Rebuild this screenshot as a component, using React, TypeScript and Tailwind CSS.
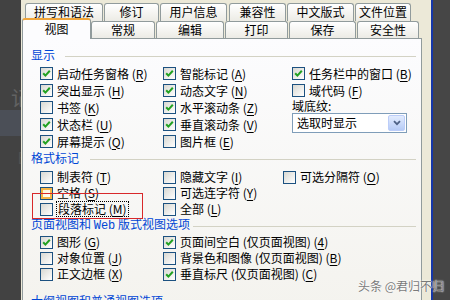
import React from 'react';

type O = { t: string; k: string; on?: boolean; hover?: boolean; focus?: boolean };

const ROW1 = [
  { t: '拼写和语法', c: 'ml-[4px] w-[78px]' },
  { t: '修订', c: 'ml-[1px] w-[55px]' },
  { t: '用户信息', c: 'ml-[1px] w-[67px]' },
  { t: '兼容性', c: 'ml-[2px] w-[57px]' },
  { t: '中文版式', c: 'ml-[1px] w-[67px]' },
  { t: '文件位置', c: 'ml-[1px] w-[56px]' },
];

const ROW2 = [
  { t: '常规', c: 'ml-0 w-[64px]' },
  { t: '编辑', c: 'ml-[1px] w-[68px]' },
  { t: '打印', c: 'ml-[1px] w-[63px]' },
  { t: '保存', c: 'ml-[1px] w-[67px]' },
  { t: '安全性', c: 'ml-[1px] w-[62px]' },
];

const S1: O[][] = [
  [
    { t: '启动任务窗格', k: 'R', on: true },
    { t: '突出显示', k: 'H', on: true },
    { t: '书签', k: 'K' },
    { t: '状态栏', k: 'U', on: true },
    { t: '屏幕提示', k: 'Q', on: true },
  ],
  [
    { t: '智能标记', k: 'A', on: true },
    { t: '动态文字', k: 'N', on: true },
    { t: '水平滚动条', k: 'Z', on: true },
    { t: '垂直滚动条', k: 'V', on: true },
    { t: '图片框', k: 'E' },
  ],
];

const S2: O[][] = [
  [
    { t: '制表符', k: 'T' },
    { t: '空格', k: 'S', hover: true },
    { t: '段落标记', k: 'M', focus: true },
  ],
  [
    { t: '隐藏文字', k: 'I' },
    { t: '可选连字符', k: 'Y' },
    { t: '全部', k: 'L' },
  ],
  [{ t: '可选分隔符', k: 'O' }],
];

const S3: O[][] = [
  [
    { t: '图形', k: 'G', on: true },
    { t: '对象位置', k: 'J' },
    { t: '正文边框', k: 'X' },
  ],
  [
    { t: '页面间空白 (仅页面视图)', k: '4', on: true },
    { t: '背景色和图像 (仅页面视图)', k: 'B' },
    { t: '垂直标尺 (仅页面视图)', k: 'C', on: true },
  ],
];

function Box({ on, hover }: { on?: boolean; hover?: boolean }) {
  return (
    <span className="relative flex h-[13px] w-[13px] shrink-0 items-center justify-center border border-[#1c5180] bg-gradient-to-br from-[#d8d8d2] to-white">
      {hover && <span className="absolute inset-0 border-2 border-[#f7b545] bg-gradient-to-br from-[#fff3d2] to-white" />}
      {on && (
        <svg width="9" height="9" viewBox="0 0 9 9" className="relative">
          <path d="M1.2 4.2 L3.4 6.6 L7.8 1.8" stroke="#21a121" strokeWidth="2" fill="none" />
        </svg>
      )}
    </span>
  );
}

function Opt({ t, k, on, hover, focus }: O) {
  return (
    <div className="flex h-full items-center gap-[4px] whitespace-nowrap">
      <Box on={on} hover={hover} />
      <span className={focus ? 'px-[1px] outline-1 outline-dotted outline-black' : ''}>
        {t} (<span className="underline underline-offset-2">{k}</span>)
      </span>
    </div>
  );
}

function Head({ children, gap }: { children: React.ReactNode; gap: string }) {
  return (
    <div className="flex h-[14px] items-center pl-[8px] pr-[5px] text-[#0046d5]">
      <span className="whitespace-nowrap">{children}</span>
      <span className={`mt-[3px] h-px flex-1 bg-[#d3d2c4] ${gap}`} />
    </div>
  );
}

export default function App() {
  return (
    <div className="relative flex h-[300px] w-[450px] overflow-hidden bg-[#454545] font-['Noto_Sans_CJK_SC',sans-serif] text-[12px] leading-[14px] text-black">
      {/* 左侧背景 */}
      <div className="flex w-[21px] shrink-0 flex-col overflow-hidden bg-[#424242]">
        <div className="h-[86px]" />
        <div className="-mr-[10px] flex h-[24px] items-center justify-end text-[20px] text-[#626262]">记</div>
        <div className="h-[26px] bg-[#4b4f57]" />
        <div className="-mr-[6px] mt-[12px] flex h-[18px] items-center justify-end text-[16px] text-[#525252]">E</div>
      </div>

      {/* 对话框 */}
      <div className="flex w-[410px] shrink-0 flex-col bg-[#ece9d8] pt-[3px]">
        <div className="flex h-[18px]">
          {ROW1.map((x) => (
            <div
              key={x.t}
              className={`${x.c} flex h-[18px] items-center justify-center rounded-t-[3px] border border-b-0 border-[#919b9c] bg-gradient-to-b from-white to-[#ecebe5] pb-[1px]`}
            >
              {x.t}
            </div>
          ))}
        </div>
        <div className="relative z-10 -mt-[3px] flex h-[20px] items-end">
          <div className="-mb-[1px] ml-[1px] flex h-[21px] w-[69px] items-center justify-center rounded-t-[3px] border-x border-t-2 border-[#919b9c] border-t-[#f0a53a] bg-[#fcfcfe] pb-[2px]">
            视图
          </div>
          {ROW2.map((x) => (
            <div
              key={x.t}
              className={`${x.c} flex h-[17px] items-center justify-center rounded-t-[3px] border border-b-0 border-[#919b9c] bg-gradient-to-b from-white to-[#ecebe5]`}
            >
              {x.t}
            </div>
          ))}
        </div>

        {/* 面板 */}
        <div className="ml-[1px] flex w-[400px] flex-1 flex-col border border-[#919b9c] bg-gradient-to-b from-[#fcfcfe] to-[#f4f3ee] pt-[9px]">
          <Head gap="ml-[10px]">显示</Head>
          <div className="mt-[3px] grid grid-cols-[123px_129px_1fr] pl-[17px]">
            {S1.map((col, i) => (
              <div key={i} className="flex flex-col">
                {col.map((o) => (
                  <div key={o.t} className="h-[17px]">
                    <Opt {...o} />
                  </div>
                ))}
              </div>
            ))}
            <div className="flex flex-col">
              <div className="h-[17px]">
                <Opt t="任务栏中的窗口" k="B" on />
              </div>
              <div className="h-[17px]">
                <Opt t="域代码" k="F" />
              </div>
              <div className="flex h-[14px] items-center">
                域底纹<span className="underline underline-offset-2">:</span>
              </div>
              <div className="flex h-[20px] w-[115px] items-center justify-between border border-[#7f9db9] bg-white pl-[4px] pr-[1px]">
                <span>选取时显示</span>
                <span className="flex h-[16px] w-[17px] items-center justify-center rounded-[2px] border border-[#bccdf9] bg-gradient-to-b from-[#e3ecfe] to-[#b6cbf6]">
                  <svg width="8" height="6" viewBox="0 0 8 6">
                    <path d="M1 1.2 L4 4.2 L7 1.2" stroke="#4d6185" strokeWidth="1.8" fill="none" />
                  </svg>
                </span>
              </div>
            </div>
          </div>

          <div className="mt-[1px]">
            <Head gap="ml-[11px]">格式标记</Head>
          </div>
          <div className="mt-[4px] grid grid-cols-[123px_120px_1fr] pl-[17px]">
            {S2.map((col, i) => (
              <div key={i} className="flex flex-col">
                {col.map((o) => (
                  <div key={o.t} className="h-[16px]">
                    <Opt {...o} />
                  </div>
                ))}
              </div>
            ))}
          </div>

          <div className="mt-[1px]">
            <Head gap="ml-[3px]">
              页面视图和 <span className="font-['Liberation_Mono',monospace]">Web</span> 版式视图选项
            </Head>
          </div>
          <div className="mt-[2px] grid grid-cols-[123px_1fr] pl-[17px]">
            {S3.map((col, i) => (
              <div key={i} className="flex flex-col">
                {col.map((o) => (
                  <div key={o.t} className="h-[16px]">
                    <Opt {...o} />
                  </div>
                ))}
              </div>
            ))}
          </div>

          <div className="mt-[12px]">
            <Head gap="ml-[6px]">大纲视图和普通视图选项</Head>
          </div>
        </div>
      </div>

      <div className="w-[2px] shrink-0 bg-[#1637a8]" />
      <div className="flex-1 bg-[#464646]" />

      {/* 红框标注 */}
      <div className="absolute left-[32px] top-[193px] h-[26px] w-[111px] border-[1.5px] border-[#d8282a]" />

      {/* 水印 */}
      <div className="absolute left-[358px] top-[278px] whitespace-nowrap text-[12px] leading-[15px] text-[#7a7a7a] [text-shadow:0_0_2px_#fff,0_0_1px_#fff]">
        头条 @君归不归
      </div>
    </div>
  );
}
